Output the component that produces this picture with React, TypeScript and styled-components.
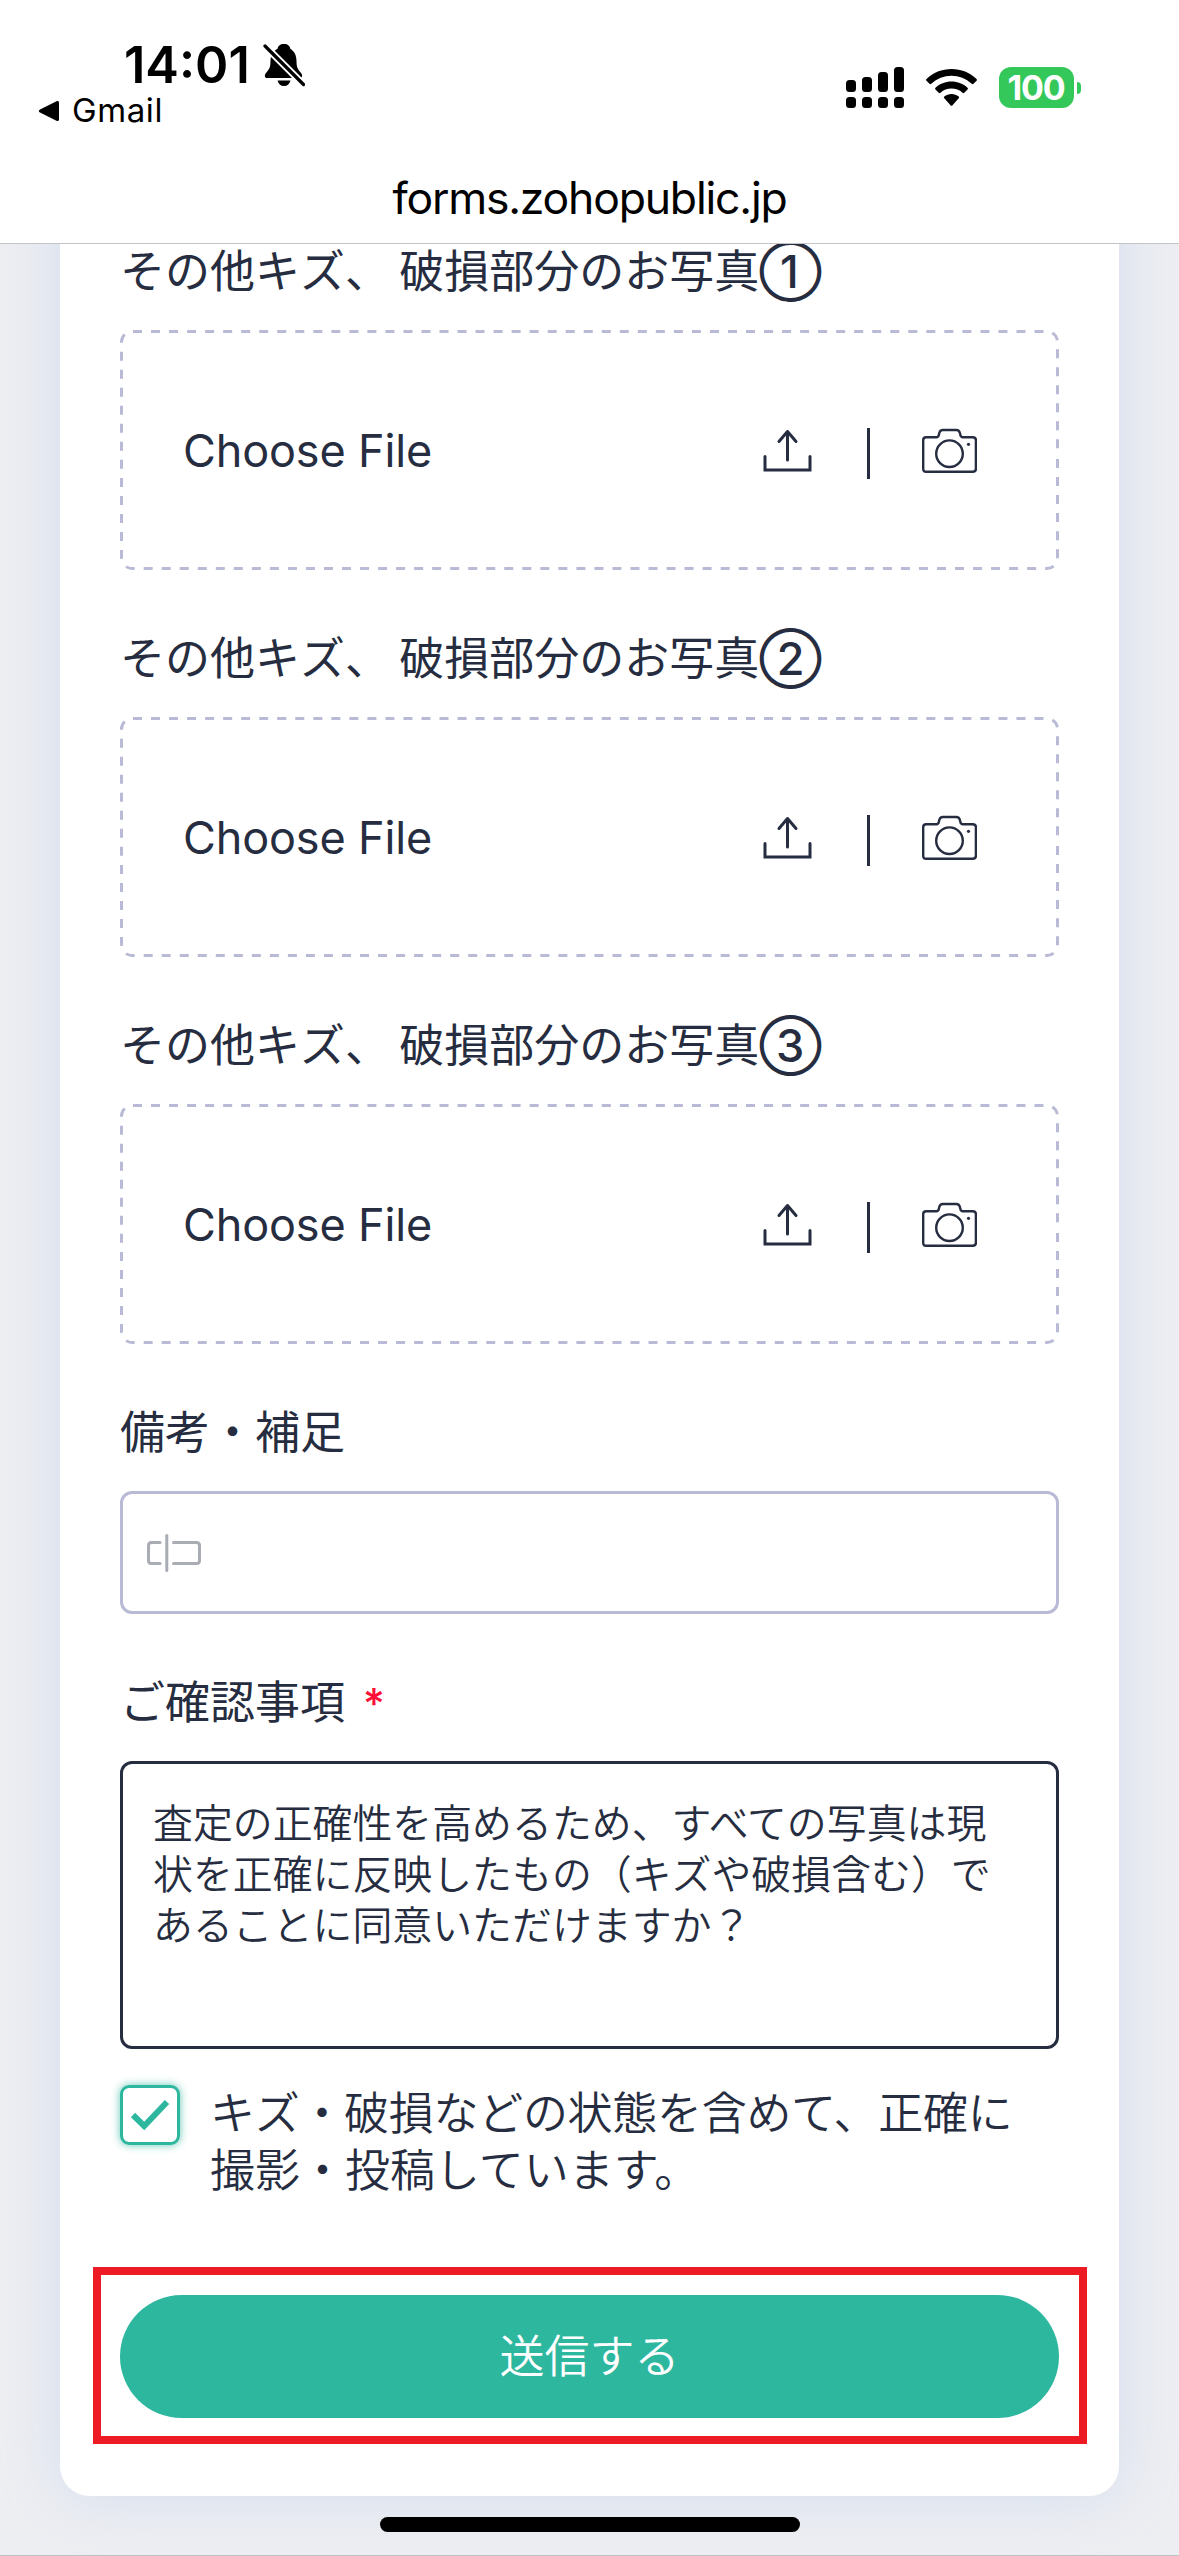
import React from "react";
import styled, { createGlobalStyle } from "styled-components";

const INK = "#262d40";
const LINE = "#b9bad6";
const GREEN = "#2eb79f";

const GlobalStyle = createGlobalStyle`
  * { box-sizing: border-box; }
  html, body { margin: 0; padding: 0; }
  body { font-family: Inter, "Noto Sans CJK JP", sans-serif; color: ${INK}; background: #fff; }
`;

const Screen = styled.div`
  position: relative;
  display: flex;
  flex-direction: column;
  width: 1179px;
  height: 2556px;
  overflow: hidden;
  background: #fff;
`;

const StatusBar = styled.header`
  display: flex;
  justify-content: space-between;
  height: 156px;
  padding: 36px 98px 0 38px;
  color: #000;
`;

const StatusLeft = styled.div`
  display: flex;
  flex-direction: column;
`;

const ClockRow = styled.div`
  display: flex;
  align-items: center;
  gap: 13px;
  height: 58px;
  padding-left: 86px;
`;

const Clock = styled.span`
  font-size: 50.5px;
  font-weight: 600;
  line-height: 58px;
  letter-spacing: 0;
`;

const BackLink = styled.div`
  display: flex;
  align-items: center;
  gap: 12px;
  height: 33px;
  font-size: 33px;
  line-height: 33px;
  letter-spacing: 0.6px;
`;

const StatusRight = styled.div`
  display: flex;
  align-items: center;
  height: 103px;
  gap: 22px;
`;

const Battery = styled.div`
  display: flex;
  align-items: center;
  gap: 3px;
`;

const BatteryBody = styled.div`
  display: flex;
  align-items: center;
  justify-content: center;
  width: 75px;
  height: 41px;
  padding-right: 1px;
  border-radius: 12px;
  background: #34c759;
  color: #fff;
  font-size: 34px;
  font-weight: 700;
  letter-spacing: -1.2px;
`;

const BatteryTip = styled.div`
  width: 4px;
  height: 12px;
  border-radius: 0 5px 5px 0;
  background: #34c759;
`;

const AddressBar = styled.div`
  display: flex;
  align-items: center;
  justify-content: center;
  height: 88px;
  padding-bottom: 3px;
  border-bottom: 1px solid #c4c4c8;
  color: #000;
  font-size: 44.5px;
  letter-spacing: -1.2px;
`;

const Viewport = styled.main`
  flex: 1;
  overflow: hidden;
  padding: 0 60px;
  border-bottom: 1px solid #bfc0c6;
  background: #edeef2;
`;

const Card = styled.form`
  display: flex;
  flex-direction: column;
  height: 2402px;
  margin: -150px 0 0;
  padding: 89px 60px 0;
  border-radius: 30px;
  background: #fff;
  box-shadow: 0 0 60px rgba(160, 190, 235, 0.33);
`;

const Field = styled.section`
  display: flex;
  flex-direction: column;
  padding-top: 60px;
`;

const Label = styled.label`
  height: 57px;
  margin-bottom: 30px;
  font-size: 45px;
  line-height: 57px;
  white-space: pre;
  word-spacing: -3.5px;
`;

const Circled = styled.span`
  font-weight: 500;
`;

const Required = styled.span`
  margin-left: 18px;
  color: #ff0f38;
  font-size: 42px;
  font-weight: 500;
`;

const DropZone = styled.div`
  position: relative;
  display: flex;
  align-items: center;
  height: 240px;
  padding: 0 82px 0 63px;
  font-size: 45px;
  letter-spacing: -0.15px;
`;

const DashedOutline = styled.svg`
  position: absolute;
  inset: 0;
`;

const Prompt = styled.span`
  flex: 1;
`;

const Actions = styled.div`
  display: flex;
  align-items: center;
  padding-top: 2px;
`;

const Divider = styled.i`
  width: 3px;
  height: 51px;
  margin: 5px 52px 0 54px;
  background: ${INK};
`;

const TextInput = styled.div`
  display: flex;
  align-items: center;
  height: 123px;
  padding-left: 24px;
  border: 3px solid ${LINE};
  border-radius: 12px;
`;

const Terms = styled.div`
  height: 288px;
  padding: 34px 30px;
  border: 3px solid ${INK};
  border-radius: 12px;
  font-size: 39.9px;
  font-weight: 350;
  line-height: 51px;
  white-space: pre;
`;

const ConsentRow = styled.div`
  display: flex;
  gap: 30px;
  margin-top: 36px;
`;

const Checkbox = styled.span`
  display: flex;
  align-items: center;
  justify-content: center;
  width: 60px;
  height: 60px;
  border: 3px solid ${GREEN};
  border-radius: 9px;
  box-shadow: 0 0 8px rgba(46, 183, 159, 0.75);
`;

const ConsentText = styled.p`
  margin: 0;
  font-size: 45px;
  font-weight: 350;
  line-height: 57px;
  white-space: pre;
`;

const ConsentLine = styled.span<{ $tracking?: string }>`
  display: block;
  letter-spacing: ${(p) => p.$tracking ?? "0"};
`;

const Highlight = styled.div`
  height: 177px;
  margin: 68px -28px 0 -27px;
  padding: 20px 20px 0 19px;
  border: 8px solid #ed1c24;
`;

const Submit = styled.button`
  display: block;
  width: 100%;
  height: 123px;
  padding: 0;
  border: 0;
  border-radius: 62px;
  background: ${GREEN};
  color: #fff;
  font: 350 45px/123px Inter, "Noto Sans CJK JP", sans-serif;
`;

const HomeIndicator = styled.div`
  position: absolute;
  left: 380px;
  bottom: 24px;
  width: 420px;
  height: 15px;
  border-radius: 8px;
  background: #000;
`;

const MutedBell = () => (
  <svg width="42" height="44" viewBox="0 0 42 44">
    <path
      d="M21 1c-4 0-6 2-6.600 5C10 8 7.500 12 7.500 18c0 6-1 8-4.500 12-1.800 2.200-1.500 5 1 5h33c2.500 0 2.800-2.800 1-5-3.500-4-4.500-6-4.500-12 0-6-2.500-10-6-12-.8-3-2.500-5-6.500-5zM14.500 37.500h13c-.8 3.500-3 5.500-6.500 5.500s-5.700-2-6.500-5.500z"
      fill="#000"
    />
    <path d="M2 3 40.500 41.500" stroke="#fff" strokeWidth="7" />
    <path d="M2 3 40.500 41.500" stroke="#000" strokeWidth="3.200" strokeLinecap="round" />
  </svg>
);

const Signal = () => (
  <svg width="58" height="41" viewBox="0 0 58 41">
    {[13, 10, 5, 0].map((top, i) => (
      <g key={top}>
        <rect x={i * 16} y={top} width="10" height={25 - top} rx="3.500" />
        <rect x={i * 16} y="30" width="10" height="11" rx="3.500" />
      </g>
    ))}
  </svg>
);

const Wifi = () => (
  <svg width="51" height="38" viewBox="0 0 51 38">
    <path d="M25.500 0C16 0 7 3.600.5 10c-.6.600-.6 1.200 0 1.800l3 3c.6.600 1.200.600 1.800 0C11 9.500 18 6.800 25.500 6.800S40 9.500 45.700 14.800c.6.600 1.200.600 1.800 0l3-3c.6-.6.600-1.200 0-1.800C44 3.600 35 0 25.500 0z" />
    <path d="M25.500 12.500c-6.200 0-11.800 2.300-16 6.200-.6.600-.6 1.200 0 1.800l3.200 3.200c.6.600 1.200.600 1.800 0 3-2.800 6.800-4.200 11-4.200s8 1.400 11 4.200c.6.600 1.200.600 1.800 0l3.200-3.200c.6-.6.600-1.200 0-1.800-4.200-3.900-9.800-6.200-16-6.200z" />
    <path d="M25.500 25c-2.800 0-5.200 1-7.200 2.600-.6.500-.6 1.100 0 1.700l6.200 6.900c.6.700 1.400.7 2 0l6.200-6.900c.6-.6.600-1.200 0-1.700-2-1.600-4.400-2.600-7.200-2.600z" />
  </svg>
);

const BackTriangle = () => (
  <svg width="22" height="22" viewBox="0 0 22 22">
    <path d="M2 9.400 18.500 1.300c1.500-.7 2.500 0 2.500 1.500v16.400c0 1.500-1 2.200-2.500 1.500L2 12.600c-1.500-.8-1.500-2.400 0-3.200z" />
  </svg>
);

const UploadIcon = () => (
  <svg width="50" height="46" viewBox="0 0 50 46" fill="none" stroke={INK} strokeWidth="3" strokeLinecap="round">
    <path d="M2 28.500v13.500h45v-13.500" />
    <path d="M24.500 32V4M16 13.500 24.500 3.500l8.500 10" strokeLinejoin="round" />
  </svg>
);

const CameraIcon = () => (
  <svg width="55" height="46" viewBox="0 0 55 46" fill="none" stroke={INK} strokeWidth="2.400">
    <path d="M4.200 9.200h10.300c1.500 0 2-.8 2.300-2.200l.5-2C17.800 3 18.800 2 20.800 2h13.600c2 0 3 1 3.500 3l.5 2c.3 1.400.8 2.200 2.300 2.200h10c2 0 3.200 1.100 3.200 3v28.600c0 2-1.200 3-3.200 3H4.200c-2 0-3-1-3-3V12.200c0-1.900 1-3 3-3z" />
    <circle cx="27.500" cy="25.700" r="13.300" />
    <circle cx="46.500" cy="16.300" r="1.600" fill={INK} stroke="none" />
  </svg>
);

const FieldIcon = () => (
  <svg width="55" height="38" viewBox="0 0 55 38" fill="none" stroke="#a9acb3" strokeWidth="3" strokeLinecap="round">
    <path d="M13 8.500H4.500c-2 0-3 1-3 3v15c0 2 1 3 3 3H13" />
    <path d="M19.800 1.500v35" />
    <path d="M26.500 8.500h23c2 0 3 1 3 3v15c0 2-1 3-3 3h-23" />
  </svg>
);

const CheckMark = () => (
  <svg width="40" height="32" viewBox="0 0 40 32" fill="none" stroke={GREEN} strokeWidth="6">
    <path d="M3 16 14.200 27 37 3" />
  </svg>
);

const FileField = ({ label, mark }: { label: string; mark: string }) => (
  <Field>
    <Label>
      {label}
      <Circled>{mark}</Circled>
    </Label>
    <DropZone>
      <DashedOutline width="939" height="240" viewBox="0 0 939 240" fill="none">
        <path
          d="M937.500 120V228A10.500 10.500 0 0 1 927 238.500H12A10.500 10.500 0 0 1 1.500 228V12A10.500 10.500 0 0 1 12 1.500H927A10.500 10.500 0 0 1 937.500 12Z"
          stroke={LINE}
          strokeWidth="3"
          strokeDasharray="9 9.030"
          strokeDashoffset="9"
        />
      </DashedOutline>
      <Prompt>Choose File</Prompt>
      <Actions>
        <UploadIcon />
        <Divider />
        <CameraIcon />
      </Actions>
    </DropZone>
  </Field>
);

const marks = ["①", "②", "③"];

export default function App() {
  return (
    <Screen>
      <GlobalStyle />
      <StatusBar>
        <StatusLeft>
          <ClockRow>
            <Clock>14:01</Clock>
            <MutedBell />
          </ClockRow>
          <BackLink>
            <BackTriangle />
            Gmail
          </BackLink>
        </StatusLeft>
        <StatusRight>
          <Signal />
          <Wifi />
          <Battery>
            <BatteryBody>100</BatteryBody>
            <BatteryTip />
          </Battery>
        </StatusRight>
      </StatusBar>
      <AddressBar>forms.zohopublic.jp</AddressBar>
      <Viewport>
        <Card>
          {marks.map((mark) => (
            <FileField key={mark} label="その他キズ、 破損部分のお写真" mark={mark} />
          ))}
          <Field>
            <Label>備考・補足</Label>
            <TextInput>
              <FieldIcon />
            </TextInput>
          </Field>
          <Field>
            <Label>
              ご確認事項<Required>*</Required>
            </Label>
            <Terms>
              {"査定の正確性を高めるため、すべての写真は現\n状を正確に反映したもの（キズや破損含む）で\nあることに同意いただけますか？"}
            </Terms>
          </Field>
          <ConsentRow>
            <Checkbox>
              <CheckMark />
            </Checkbox>
            <ConsentText>
              <ConsentLine $tracking="-0.3px">キズ・破損などの状態を含めて、正確に</ConsentLine>
              <ConsentLine>撮影・投稿しています。</ConsentLine>
            </ConsentText>
          </ConsentRow>
          <Highlight>
            <Submit type="button">送信する</Submit>
          </Highlight>
        </Card>
      </Viewport>
      <HomeIndicator />
    </Screen>
  );
}
